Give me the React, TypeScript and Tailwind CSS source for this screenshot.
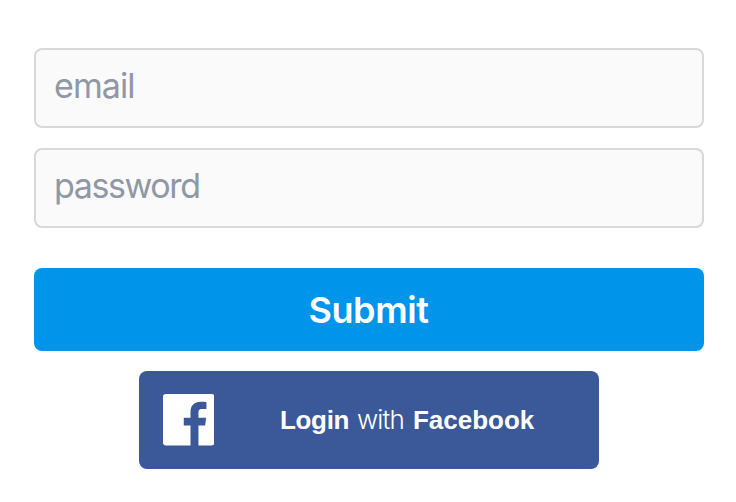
export default function App() {
  const input =
    "h-20 rounded-lg border-2 border-[#d8d8d8] bg-[#fafafa] px-[18px] pb-[5px] text-[34px] outline-none placeholder:text-[#9097a5]";
  return (
    <main className="flex h-[502px] w-[736px] flex-col items-center bg-white pl-0.5 pt-12 font-['Inter',sans-serif]">
      <form className="flex w-[670px] flex-col" onSubmit={(e) => e.preventDefault()}>
        <input type="email" placeholder="email" className={`${input} tracking-[-0.9px]`} />
        <input type="password" placeholder="password" className={`${input} mt-5 tracking-[-1.4px]`} />
        <button className="mt-10 h-[83px] rounded-lg bg-[#0095eb] pr-px text-[36px] font-semibold tracking-[-0.4px] text-white">Submit</button>
      </form>
      <button className="mt-5 flex h-[98px] w-[460px] items-center rounded-lg bg-[#3b5998] pl-[23.5px] text-white">
        <svg width="51.4" height="51.4" viewBox="0 0 51 51" fill="currentColor">
          <path d="M2.8 0H48.2Q51 0 51 2.8V48.2Q51 51 48.2 51H35.2V31.2H41.8L42.8 23.5H35.2V18.6C35.2 16.4 35.8 14.9 39 14.9H43.1V8C42.4 7.9 40 7.7 37.2 7.7C31.3 7.7 27.3 11.3 27.3 17.8V23.5H20.6V31.2H27.3V51H2.8Q0 51 0 48.2V2.8Q0 0 2.8 0Z" />
        </svg>
        <span className="ml-[66px] flex items-baseline whitespace-nowrap font-['Liberation_Sans',sans-serif] text-[26px]">
          <b className="w-[77px] text-left tracking-[-0.3px]">Login</b>
          <span className="w-14 text-left font-['Inter',sans-serif] font-light tracking-[-0.8px]">with</span>
          <b>Facebook</b>
        </span>
      </button>
    </main>
  );
}
